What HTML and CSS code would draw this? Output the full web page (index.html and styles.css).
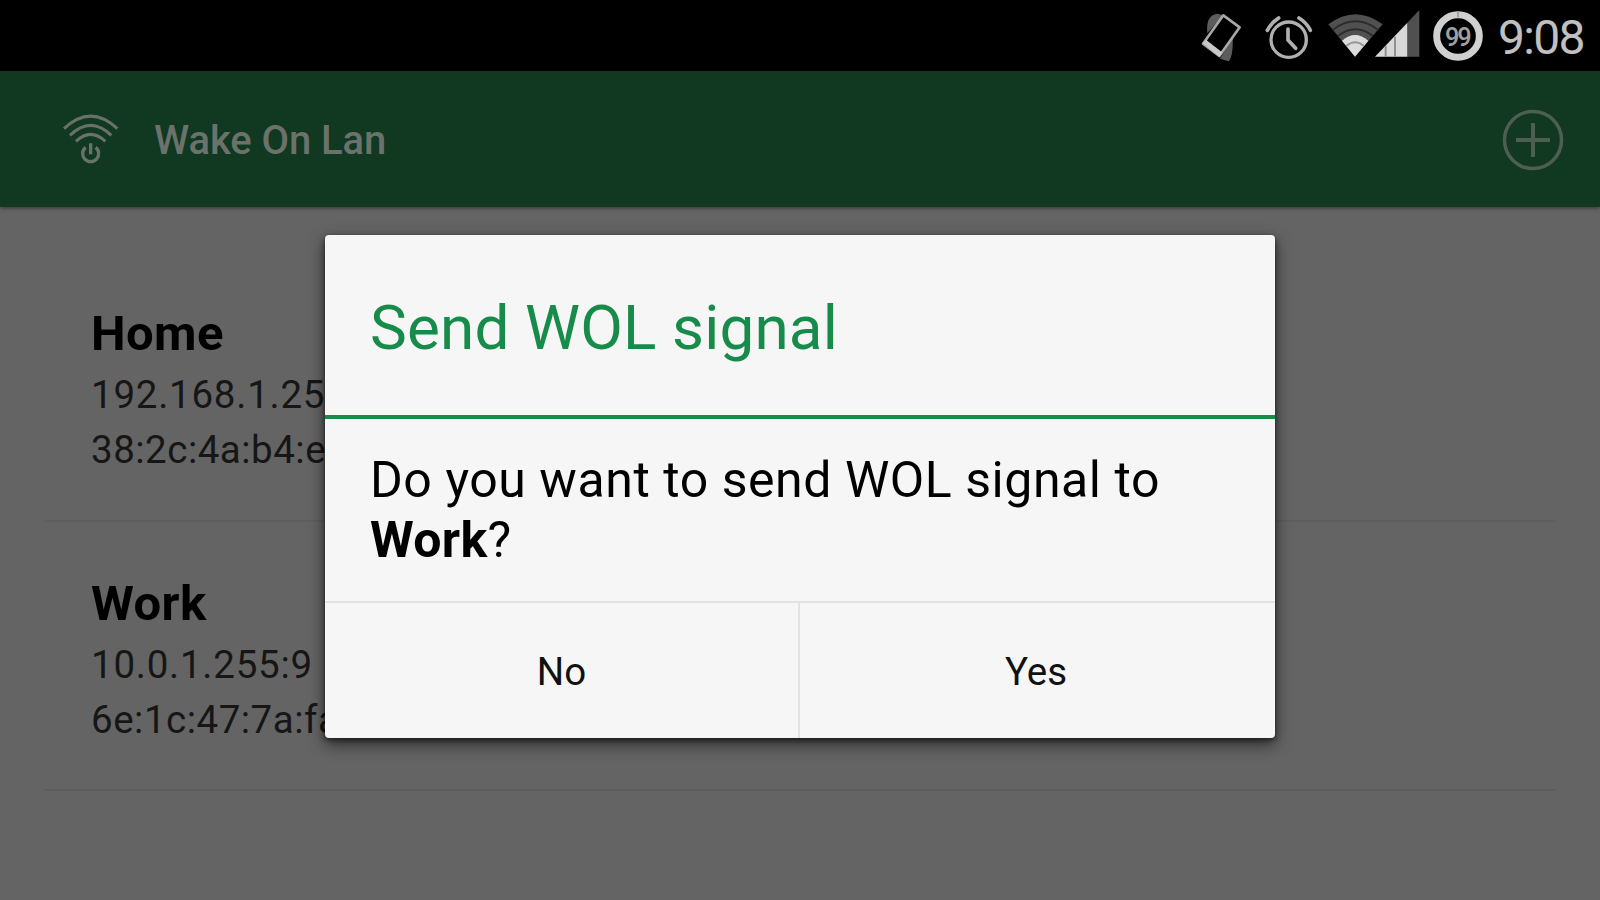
FILE: index.html
```
<!DOCTYPE html>
<html lang="en">
<head>
    <meta charset="UTF-8">
    <meta name="viewport" content="width=device-width, initial-scale=1.0">
    <title>Wake On Lan</title>
    <link rel="stylesheet" href="styles.css">
</head>
<body>

<div class="status-bar">
    <svg class="icon-vibrate" viewBox="60 0 132 213">
        <path d="M82 100 Q76 46 112 41 L130 46 Z" fill="#5c5c5c"/>
        <path d="M158 112 Q160 168 146 184 L120 176 Z" fill="#5c5c5c"/>
        <path d="M130 46 L179 82 L118 168 L69 131 Z" fill="#000" stroke="#a8a8a8" stroke-width="8" stroke-linejoin="round"/>
        <path d="M68 130 L118 170 L128 158 L78 119 Z" fill="#c8c8c8"/>
    </svg>
    <svg class="icon-alarm" viewBox="255 0 144 213" fill="none" stroke="#b0b0b0" stroke-linecap="round">
        <circle cx="326" cy="119" r="53" stroke-width="10"/>
        <path d="M262 91 Q274 68 296 54 M391 91 Q380 68 357 54" stroke-width="11"/>
        <path d="M324 87 V120 L347 145" stroke-width="11"/>
    </svg>
    <svg class="icon-network" viewBox="444 0 276 213">
        <path d="M525 170 L445 73 Q526 12 608 73 Z" fill="#505050"/>
        <path d="M458 90 Q526 38 595 90 M474 108 Q526 68 579 108" fill="none" stroke="#2c2c2c" stroke-width="6"/>
        <path d="M525 170 L486 122 Q525 88 565 122 Z" fill="#dcdcdc"/>
        <path d="M499 138 Q525 116 552 138" fill="none" stroke="#999" stroke-width="6"/>
        <path d="M682 68 L718 30 V170 H682 Z" fill="#505050"/>
        <path d="M585 170 L682 68 V170 Z" fill="#d8d8d8"/>
        <path d="M617 138 V170 M645 110 V170" stroke="#909090" stroke-width="6"/>
    </svg>
    <svg class="icon-battery" viewBox="96 0 156 213">
        <circle cx="174" cy="108" r="64" fill="none" stroke="#d0d0d0" stroke-width="21"/>
        <path d="M174 34 V52" stroke="#999" stroke-width="5"/>
        <text x="172" y="138" text-anchor="middle">99</text>
    </svg>
    <span class="clock">9:08</span>
</div>

<header>
    <svg class="logo" viewBox="0 0 180 180" fill="none" stroke="#687269" stroke-width="9">
        <path d="M12 59 Q92 -16 172 59 M30 79 Q92 19 154 79 M48 97 Q92 55 136 97"/>
        <path d="M77 115 A24 24 0 1 0 107 115 M92 103 V136" stroke-width="10"/>
    </svg>
    <h1>Wake On Lan</h1>
    <svg class="add" viewBox="0 0 64 64" fill="none" stroke="#4e5f52">
        <circle cx="32" cy="32" r="28.5" stroke-width="3.5"/>
        <path d="M32 15 V49 M15 32 H49" stroke-width="4"/>
    </svg>
</header>

<div class="list">
    <div class="item">
        <h2>Home</h2>
        <p class="ip">192.168.1.255:9</p>
        <p>38:2c:4a:b4:e5:9f</p>
    </div>
    <div class="item">
        <h2>Work</h2>
        <p class="ip">10.0.1.255:9</p>
        <p>6e:1c:47:7a:fa:2b</p>
    </div>
</div>

<div class="dialog">
    <h3>Send WOL signal</h3>
    <div class="message">Do you want to send WOL signal to <b>Work</b>?</div>
    <div class="buttons">
        <button>No</button>
        <button>Yes</button>
    </div>
</div>

</body>
</html>
```
FILE: styles.css
```
body {
    font-family: Roboto, sans-serif;
    background-color: #646464;
    color: #000;
    margin: 0;
    height: 900px;
    overflow: hidden;
    position: relative;
}

h1, h2, h3, p {
    margin: 0;
}

.status-bar {
    background-color: #000;
    height: 71px;
    display: flex;
    justify-content: flex-end;
    padding-right: 16px;
}

.status-bar svg {
    height: 71px;
    flex: none;
}

.icon-vibrate {
    width: 44px;
    margin-right: 21px;
}

.icon-alarm {
    width: 48px;
    margin-right: 15px;
}

.icon-network {
    width: 92px;
    margin-right: 12px;
}

.icon-battery {
    width: 52px;
}

.icon-battery text {
    font-size: 76px;
    font-weight: 500;
    letter-spacing: -6px;
    fill: #a0a0a0;
}

.clock {
    width: 86px;
    margin-left: 14px;
    color: #c0c0c0;
    font-size: 48px;
    line-height: 75px;
    letter-spacing: -1.7px;
    white-space: nowrap;
}

header {
    background-color: #113820;
    height: 136px;
    display: flex;
    align-items: center;
    padding: 0 35px 0 60px;
    box-sizing: border-box;
    box-shadow: 0 1px 4px rgba(0, 0, 0, 0.5);
}

.logo {
    width: 60px;
    height: 60px;
}

h1 {
    flex: 1;
    margin-left: 34px;
    padding-top: 3px;
    color: #6a726b;
    font-size: 40px;
    font-weight: 500;
    line-height: 60px;
    letter-spacing: -0.1px;
}

.add {
    width: 64px;
    height: 64px;
    padding-top: 1px;
}

.list {
    padding: 46px 45px 0;
}

.item {
    height: 269px;
    border-bottom: 2px solid #5e5e5e;
    padding: 48px 0 0 46px;
    box-sizing: border-box;
}

.item + .item {
    padding-top: 49px;
}

h2 {
    margin-bottom: 2px;
    font-size: 49px;
    font-weight: 700;
    line-height: 65px;
    letter-spacing: 0.4px;
}

.item p {
    color: #161616;
    font-size: 38.5px;
    line-height: 54.5px;
    letter-spacing: 0.5px;
}

.item .ip {
    letter-spacing: 0.75px;
}

/* Confirmation dialog over the list */
.dialog {
    position: absolute;
    top: 235px;
    left: 325px;
    width: 950px;
    height: 503px;
    display: flex;
    flex-direction: column;
    background-color: #f6f6f6;
    border-radius: 4px;
    box-shadow: 0 6px 16px rgba(0, 0, 0, 0.6), 0 2px 5px rgba(0, 0, 0, 0.5);
}

h3 {
    height: 180px;
    padding-left: 45px;
    border-bottom: 4px solid #178c4a;
    color: #178c4a;
    font-size: 62px;
    font-weight: 400;
    line-height: 186px;
    letter-spacing: 0.15px;
}

.message {
    flex: 1;
    padding: 31px 40px 0 45px;
    font-size: 50px;
    line-height: 60px;
    letter-spacing: 0.55px;
}

.message b {
    letter-spacing: 0.3px;
}

.buttons {
    display: flex;
    height: 135px;
    border-top: 2px solid #e2e2e2;
}

button {
    width: 473px;
    padding: 2px 0 0;
    background: none;
    border: none;
    color: #111;
    font-family: inherit;
    font-size: 38.5px;
}

button + button {
    width: 477px;
    padding-right: 3px;
    border-left: 2px solid #e2e2e2;
}
```
